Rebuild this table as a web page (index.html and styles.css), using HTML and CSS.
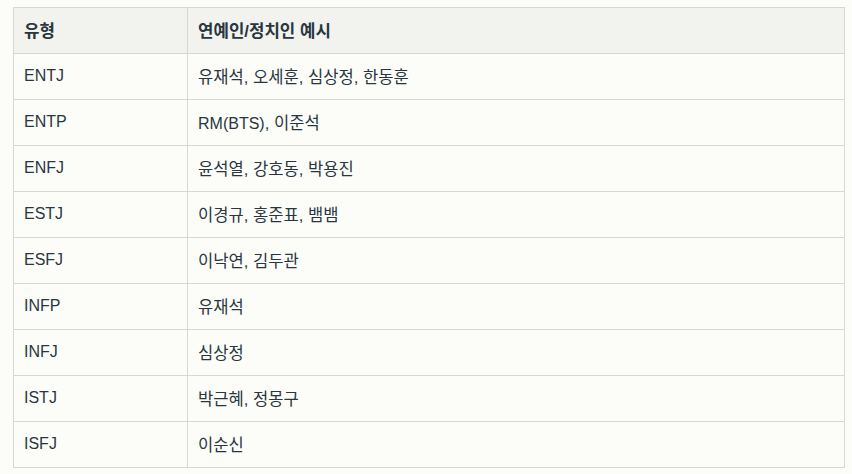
FILE: index.html
```html
<!DOCTYPE html>
<html lang="ko">
<head>
<meta charset="utf-8">
<link rel="stylesheet" href="styles.css">
</head>
<body>
<table class="mbti">
<thead>
<tr><th class="c1">유형</th><th class="c2">연예인/정치인 예시</th></tr>
</thead>
<tbody>
<tr><td class="type">ENTJ</td><td class="names">유재석, 오세훈, 심상정, 한동훈</td></tr>
<tr><td class="type">ENTP</td><td class="names"><span class="lat">RM(BTS)</span>, 이준석</td></tr>
<tr><td class="type">ENFJ</td><td class="names">윤석열, 강호동, 박용진</td></tr>
<tr><td class="type">ESTJ</td><td class="names">이경규, 홍준표, 뱀뱀</td></tr>
<tr><td class="type">ESFJ</td><td class="names">이낙연, 김두관</td></tr>
<tr><td class="type">INFP</td><td class="names">유재석</td></tr>
<tr><td class="type">INFJ</td><td class="names">심상정</td></tr>
<tr><td class="type">ISTJ</td><td class="names">박근혜, 정몽구</td></tr>
<tr><td class="type">ISFJ</td><td class="names">이순신</td></tr>
</tbody>
</table>
</body>
</html>
```
FILE: styles.css
```css
html, body {
  background: #fcfdf9;
}
body {
  margin: 7px 7px 0 13px;
  font-family: "Liberation Sans", "Noto Sans CJK KR", sans-serif;
  font-size: 16px;
  color: #29363f;
}
.mbti {
  border-collapse: collapse;
  width: 832px;
}
.mbti th, .mbti td {
  border: 1px solid #d6d7d0;
  height: 46px;
  padding: 0 10px 2px;
  text-align: left;
  vertical-align: middle;
  box-sizing: border-box;
}
.mbti th {
  background: #f2f3ee;
  font-weight: 700;
  font-size: 16.8px;
}
.mbti .c1 {
  width: 174px;
}
.mbti .type {
  font-size: 16px;
}
.mbti .names {
  font-size: 16.6px;
}
.mbti .lat {
  font-size: 16px;
}
```
